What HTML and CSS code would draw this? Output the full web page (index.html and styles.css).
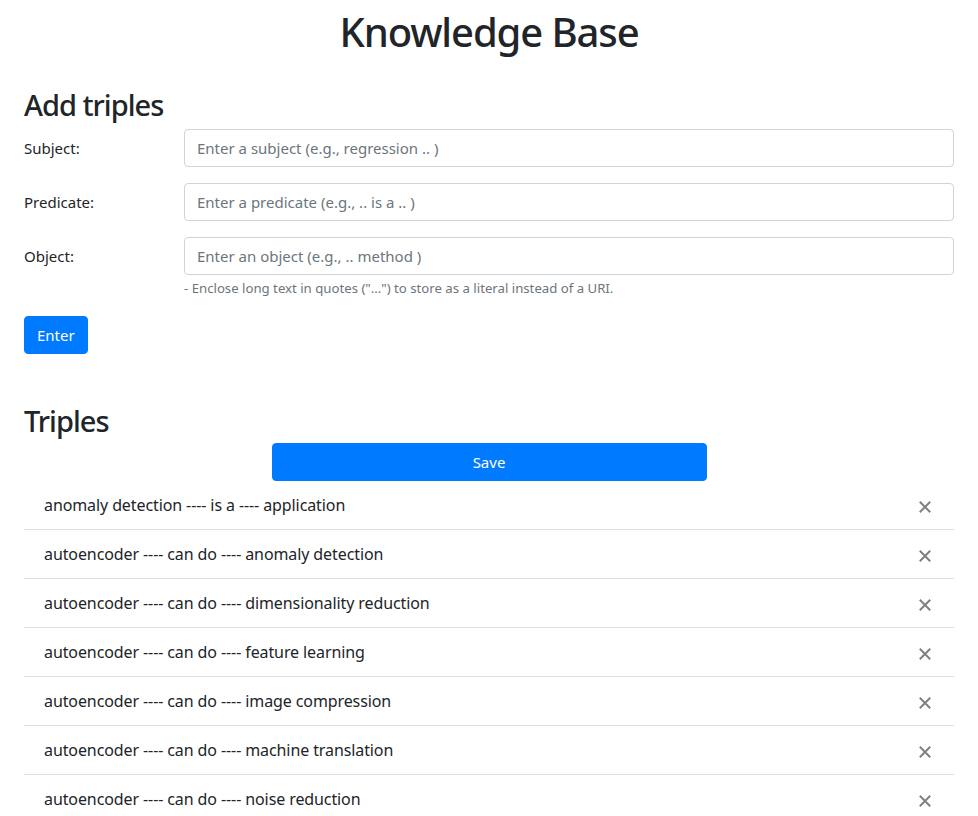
FILE: index.html
```html
<!DOCTYPE html>
<html lang="en">
<head>
<meta charset="utf-8">
<title>Knowledge Base</title>
<link rel="stylesheet" href="styles.css">
</head>
<body>
<div class="container">
  <h1 class="title">Knowledge Base</h1>

  <section class="add-section">
    <h2 class="section-title add-title">Add triples</h2>
    <form class="triple-form">
      <div class="form-row">
        <label class="form-label" for="subject">Subject:</label>
        <div class="form-field">
          <input class="form-control" id="subject" type="text" placeholder="Enter a subject (e.g., regression .. )">
        </div>
      </div>
      <div class="form-row">
        <label class="form-label" for="predicate">Predicate:</label>
        <div class="form-field">
          <input class="form-control" id="predicate" type="text" placeholder="Enter a predicate (e.g., .. is a .. )">
        </div>
      </div>
      <div class="form-row">
        <label class="form-label" for="object">Object:</label>
        <div class="form-field">
          <input class="form-control" id="object" type="text" placeholder="Enter an object (e.g., .. method )">
          <small class="form-text">- Enclose long text in quotes ("...") to store as a literal instead of a URI.</small>
        </div>
      </div>
      <div class="form-actions">
        <button type="button" class="btn btn-primary">Enter</button>
      </div>
    </form>
  </section>

  <section class="triples-section">
    <h2 class="section-title triples-title">Triples</h2>
    <div class="save-wrap">
      <button type="button" class="btn btn-primary btn-save">Save</button>
    </div>
    <ul class="list-group">
      <li class="list-item"><span class="triple-text">anomaly detection ---- is a ---- application</span><button class="close" type="button" aria-label="Delete"><svg width="12" height="12" viewBox="0 0 12 12"><path d="M0.8 0.8 L11.2 11.2 M11.2 0.8 L0.8 11.2" stroke="#808080" stroke-width="2" fill="none"/></svg></button></li>
      <li class="list-item"><span class="triple-text">autoencoder ---- can do ---- anomaly detection</span><button class="close" type="button" aria-label="Delete"><svg width="12" height="12" viewBox="0 0 12 12"><path d="M0.8 0.8 L11.2 11.2 M11.2 0.8 L0.8 11.2" stroke="#808080" stroke-width="2" fill="none"/></svg></button></li>
      <li class="list-item"><span class="triple-text">autoencoder ---- can do ---- dimensionality reduction</span><button class="close" type="button" aria-label="Delete"><svg width="12" height="12" viewBox="0 0 12 12"><path d="M0.8 0.8 L11.2 11.2 M11.2 0.8 L0.8 11.2" stroke="#808080" stroke-width="2" fill="none"/></svg></button></li>
      <li class="list-item"><span class="triple-text">autoencoder ---- can do ---- feature learning</span><button class="close" type="button" aria-label="Delete"><svg width="12" height="12" viewBox="0 0 12 12"><path d="M0.8 0.8 L11.2 11.2 M11.2 0.8 L0.8 11.2" stroke="#808080" stroke-width="2" fill="none"/></svg></button></li>
      <li class="list-item"><span class="triple-text">autoencoder ---- can do ---- image compression</span><button class="close" type="button" aria-label="Delete"><svg width="12" height="12" viewBox="0 0 12 12"><path d="M0.8 0.8 L11.2 11.2 M11.2 0.8 L0.8 11.2" stroke="#808080" stroke-width="2" fill="none"/></svg></button></li>
      <li class="list-item"><span class="triple-text">autoencoder ---- can do ---- machine translation</span><button class="close" type="button" aria-label="Delete"><svg width="12" height="12" viewBox="0 0 12 12"><path d="M0.8 0.8 L11.2 11.2 M11.2 0.8 L0.8 11.2" stroke="#808080" stroke-width="2" fill="none"/></svg></button></li>
      <li class="list-item"><span class="triple-text">autoencoder ---- can do ---- noise reduction</span><button class="close" type="button" aria-label="Delete"><svg width="12" height="12" viewBox="0 0 12 12"><path d="M0.8 0.8 L11.2 11.2 M11.2 0.8 L0.8 11.2" stroke="#808080" stroke-width="2" fill="none"/></svg></button></li>
    </ul>
  </section>
</div>
</body>
</html>
```

FILE: styles.css
```css
* {
  box-sizing: border-box;
}

html, body {
  margin: 0;
  padding: 0;
  background: #fff;
}

body {
  font-family: "Noto Sans", "Open Sans", sans-serif;
  font-size: 16px;
  line-height: 1.5;
  color: #212529;
}

.container {
  display: flow-root;
  padding: 8px 24px 0 24px;
}

.title {
  margin: 0;
  font-size: 40px;
  line-height: 48px;
  font-weight: 500;
  letter-spacing: -1.1px;
  text-align: center;
}

.section-title {
  margin: 0;
  font-size: 29px;
  line-height: 36px;
  font-weight: 500;
  letter-spacing: -1px;
}

.add-section {
  margin-top: 31px;
}

.add-title {
  margin-bottom: 6px;
}

.triple-form {
  display: flex;
  flex-direction: column;
}

.form-row {
  display: grid;
  grid-template-columns: 160px 1fr;
  margin-bottom: 16px;
}

.form-label {
  padding-top: 7px;
  line-height: 24px;
  font-size: 15px;
}

.form-field {
  display: flex;
  flex-direction: column;
}

.form-control {
  display: block;
  width: 100%;
  height: 38px;
  padding: 6px 12px;
  font-family: inherit;
  font-size: 15px;
  line-height: 24px;
  color: #495057;
  background: #fff;
  border: 1px solid #ced4da;
  border-radius: 4px;
  outline: none;
}

.form-control::placeholder {
  color: #6c757d;
  opacity: 1;
}

.form-text {
  margin-top: 4px;
  font-size: 13.2px;
  line-height: 19px;
  color: #6c757d;
}

.form-actions {
  margin-top: 2px;
}

.btn {
  display: inline-block;
  height: 38px;
  padding: 6px 12px;
  font-family: inherit;
  font-size: 15px;
  line-height: 24px;
  border: 1px solid transparent;
  border-radius: 4px;
  cursor: pointer;
}

.btn-primary {
  color: #fff;
  background: #007bff;
  border-color: #007bff;
}

.triples-section {
  margin-top: 49px;
}

.triples-title {
  margin-bottom: 4px;
}

.save-wrap {
  display: flex;
  justify-content: center;
}

.btn-save {
  width: 435px;
}

.list-group {
  list-style: none;
  margin: 0;
  padding: 0;
}

.list-item {
  display: flex;
  align-items: flex-start;
  justify-content: space-between;
  padding: 12px 20px;
  border-bottom: 1px solid #dfdfdf;
  line-height: 24px;
  font-size: 16px;
  letter-spacing: -0.1px;
}

.close {
  display: flex;
  align-items: center;
  justify-content: center;
  width: 16px;
  height: 24px;
  margin-right: 1px;
  padding: 4px 0 0 0;
  background: transparent;
  border: 0;
  cursor: pointer;
}
```
